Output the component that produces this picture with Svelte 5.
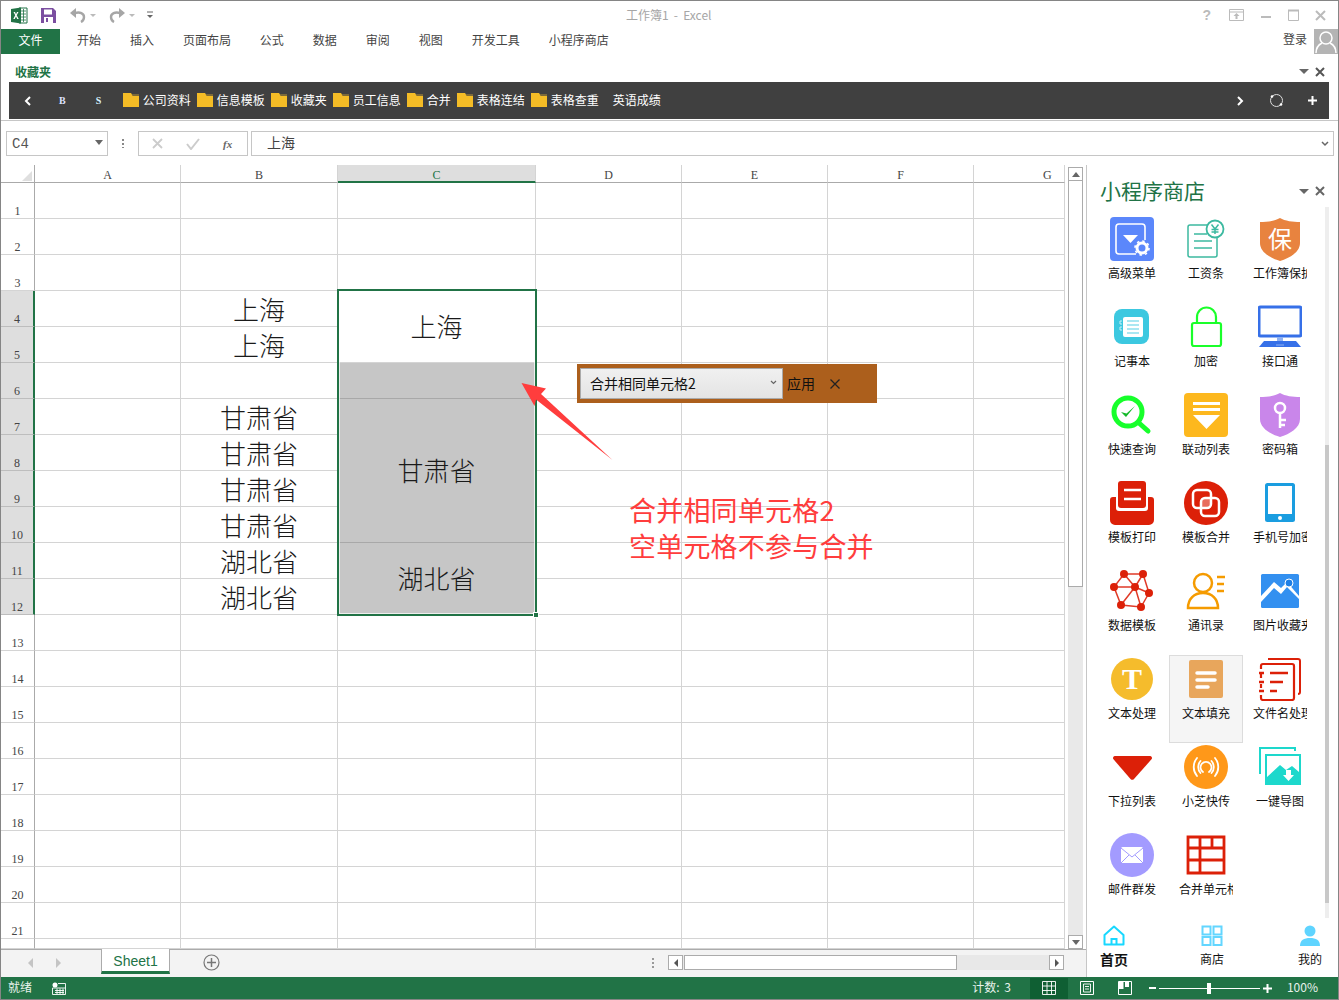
<script>
	const tabs = ["开始", "插入", "页面布局", "公式", "数据", "审阅", "视图", "开发工具", "小程序商店"];
	const folders = ["公司资料", "信息模板", "收藏夹", "员工信息", "合并", "表格连结", "表格查重"];
	const cols = ["A", "B", "C", "D", "E", "F", "G"];
	const rows = Array.from({ length: 22 }, (_, i) => i + 1);

	// text in column B by row
	const colB = { 4: "上海", 5: "上海", 7: "甘肃省", 8: "甘肃省", 9: "甘肃省", 10: "甘肃省", 11: "湖北省", 12: "湖北省" };

	// merged blocks of column C
	const merged = [
		{ start: 4, span: 2, text: "上海", grey: false },
		{ start: 6, span: 1, text: "", grey: true },
		{ start: 7, span: 4, text: "甘肃省", grey: true },
		{ start: 11, span: 2, text: "湖北省", grey: true }
	];

	const apps = [
		["高级菜单", `<rect width="44" height="44" rx="4" fill="#5b87fb"/><path d="M26 37H9a3 3 0 0 1-3-3V10a3 3 0 0 1 3-3h23a3 3 0 0 1 3 3v13" fill="none" stroke="#fff" stroke-width="1.6"/><path d="M13 18h15l-7.500 8z" fill="#fff"/><circle cx="32" cy="31" r="5" fill="none" stroke="#fff" stroke-width="3"/><circle cx="32" cy="31" r="7" fill="none" stroke="#fff" stroke-width="1.6" stroke-dasharray="2.500 3"/>`],
		["工资条", `<path d="M24 8H6a2 2 0 0 0-2 2v28a2 2 0 0 0 2 2h25a2 2 0 0 0 2-2V20" fill="none" stroke="#3cb9a0" stroke-width="1.500"/><path d="M10 17h13M10 24h18M10 31h18" stroke="#3cb9a0" stroke-width="1.600"/><circle cx="31" cy="12" r="8.500" fill="#fff" stroke="#3cb9a0" stroke-width="1.800"/><path d="M27.500 7.500 31 12l3.500-4.500M31 12v5M27.500 12.500h7M27.500 15h7" fill="none" stroke="#3cb9a0" stroke-width="1.500"/>`],
		["工作簿保护", `<path d="M22 1c5 3 13 4 20 4v21c0 9-10 15-20 18C12 41 2 35 2 26V5c7 0 15-1 20-4z" fill="#e8833f"/><text x="22" y="31" text-anchor="middle" font-size="24" fill="#fff">保</text>`],
		["记事本", `<rect x="4" y="4" width="35" height="35" rx="8" fill="#3cc8e0"/><rect x="13" y="12" width="20" height="20" rx="2" fill="#fff"/><path d="M12 16h-2v3h2M12 22h-2v3h2" fill="none" stroke="#c8f0f7"/><path d="M17 16h12M17 20h12M17 24h12M17 28h12" stroke="#8fdfee" stroke-width="1.600"/>`],
		["加密", `<rect x="8" y="18" width="29" height="23" rx="2" fill="none" stroke="#1aff2a" stroke-width="2.200"/><path d="M13 18v-6a9.500 9.500 0 0 1 19 0v6" fill="none" stroke="#1aff2a" stroke-width="2.200"/>`],
		["接口通", `<rect x="1" y="2" width="42" height="29" rx="1.500" fill="#fff" stroke="#3670e8" stroke-width="3"/><rect x="19" y="32" width="6" height="4" fill="#8fb1f2"/><path d="M6 36h32l5 6H1z" fill="#3670e8"/><path d="M18 40h8" stroke="#8fb1f2"/>`],
		["快速查询", `<circle cx="18" cy="19" r="14" fill="none" stroke="#17ff2b" stroke-width="5"/><path d="M29 30l9 8" stroke="#17ff2b" stroke-width="5" stroke-linecap="round"/><path d="M11 19l5 5 9-11-8.500 7.500z" fill="#14b82a"/>`],
		["联动列表", `<rect width="44" height="44" rx="4" fill="#fdb81e"/><path d="M9 9h27v3H9zM9 15h27v3H9zM9 22h27L22.500 36z" fill="#fff"/>`],
		["密码箱", `<path d="M22 0c5 3 13 4 20 4v22c0 9-10 15-20 18C12 41 2 35 2 26V4c7 0 15-1 20-4z" fill="#c986ea"/><circle cx="22" cy="15" r="5" fill="none" stroke="#fff" stroke-width="2.500"/><path d="M22 20v15M22 27h6M22 32h5" stroke="#fff" stroke-width="2.500" fill="none"/>`],
		["模板打印", `<rect x="8" y="0" width="28" height="27" rx="3" fill="#dc2008"/><path d="M14 9h17M14 18h17" stroke="#fff" stroke-width="2.500"/><path d="M6 16v11a3 3 0 0 0 3 3h26a3 3 0 0 0 3-3V16h3a3 3 0 0 1 3 3v20a5 5 0 0 1-5 5H5a5 5 0 0 1-5-5V19a3 3 0 0 1 3-3z" fill="#dc2008"/>`],
		["模板合并", `<circle cx="22" cy="22" r="22" fill="#dc2008"/><rect x="9" y="9" width="18" height="18" rx="4" fill="none" stroke="#fff" stroke-width="2.500"/><rect x="17" y="17" width="18" height="18" rx="4" fill="none" stroke="#fff" stroke-width="2.500"/><rect x="18" y="18" width="8" height="8" fill="#fff" fill-opacity=".35"/>`],
		["手机号加密", `<rect x="7" y="2" width="30" height="39" rx="2.500" fill="#1a9de0"/><rect x="10" y="5" width="24" height="28" fill="#fff"/><circle cx="22" cy="37" r="2" fill="#fff"/>`],
		["数据模板", `<path d="M14 5h19l6 19-8 14-20-2-7-18zM14 5l11 13M33 5l-8 13M4 18h21M25 18l14 6M25 18l6 20M25 18l-14 18" fill="none" stroke="#e03a28" stroke-width="1.500"/><g fill="#dc2008"><circle cx="14" cy="5" r="4"/><circle cx="33" cy="5" r="4"/><circle cx="4" cy="18" r="4"/><circle cx="25" cy="18" r="4"/><circle cx="39" cy="24" r="4"/><circle cx="11" cy="36" r="4"/><circle cx="31" cy="38" r="4"/></g>`],
		["通讯录", `<circle cx="19" cy="14" r="9" fill="none" stroke="#f59b00" stroke-width="2.500"/><path d="M4 39c0-9 6-15 15-15s15 6 15 15z" fill="none" stroke="#f59b00" stroke-width="2.500"/><path d="M33 8h8M33 15h7M33 22h7" stroke="#f59b00" stroke-width="2.500"/>`],
		["图片收藏夹", `<rect x="3" y="5" width="38" height="34" rx="1.500" fill="#3390f0"/><path d="M3 33l13-14 7 6 6-7 12 12v-3L29 13l-6 6-7-6L3 27z" fill="#fff"/><circle cx="31" cy="14" r="4" fill="#1e7fe6" stroke="#fff"/>`],
		["文本处理", `<circle cx="22" cy="22" r="21" fill="#f5bc2c"/><text x="22" y="32" text-anchor="middle" font-size="30" font-weight="700" fill="#fff" font-family="Liberation Serif">T</text>`],
		["文本填充", `<rect x="5" y="3" width="34" height="38" rx="2" fill="#e8a65c"/><path d="M13 16h18M13 23h18M13 30h11" stroke="#fff" stroke-width="3.500" stroke-linecap="round"/>`],
		["文件名处理", `<path d="M10 2h30a2 2 0 0 1 2 2v31a2 2 0 0 1-2 2" fill="none" stroke="#dc2008" stroke-width="2"/><path d="M3 12V9a2 2 0 0 1 2-2h29a2 2 0 0 1 2 2v32a2 2 0 0 1-2 2H5a2 2 0 0 1-2-2v-3M3 17v4M3 27v4" fill="none" stroke="#dc2008" stroke-width="2.200"/><path d="M1 16h5M12 16h18M1 25h5M12 25h13M1 34h5M12 34h7" stroke="#dc2008" stroke-width="2.400"/>`],
		["下拉列表", `<path d="M5 11h35a2 2 0 0 1 1.500 3.300L24 34a2.500 2.500 0 0 1-3.500 0L3.500 14.300A2 2 0 0 1 5 11z" fill="#dc2008"/>`],
		["小芝快传", `<circle cx="22" cy="22" r="22" fill="#ff9819"/><g fill="none" stroke="#fff" stroke-width="1.800" stroke-linecap="round"><path d="M13 31a14 14 0 0 1 0-18M31 13a14 14 0 0 1 0 18M16.500 28a9 9 0 0 1 0-12M27.500 16a9 9 0 0 1 0 12"/><path d="M19 27a5.500 5.500 0 1 1 6 0"/></g>`],
		["一键导图", `<path d="M2 29V3h35v3" fill="none" stroke="#1dd8cc" stroke-width="2"/><rect x="7" y="9" width="36" height="31" fill="#1dd8cc"/><path d="M9 11h32v16l-7-6-6 4-6-5-13 12z" fill="#fff"/><path d="M28 25h5v5h3l-5.500 6-5.500-6h3z" fill="#fff"/>`],
		["邮件群发", `<circle cx="22" cy="22" r="22" fill="#a39bff"/><rect x="11" y="14" width="22" height="16" rx="1.500" fill="#fff"/><path d="M11 15l11 9 11-9M11 30l8-8M33 30l-8-8" fill="none" stroke="#a39bff" stroke-width="1"/>`],
		["合并单元格", `<path d="M4 4h36v36H4zM4 15h36M4 27h36M16 4v36M28 4v11" fill="none" stroke="#dc2008" stroke-width="2.800"/>`]
	];
</script>

<div class="app">
	<header class="titlebar">
		<div class="qat">
			<svg width="17" height="17" viewBox="0 0 17 17"><path d="M8 1h8v15H8z" fill="#fff" stroke="#217346"/><path d="M10 4h5M10 7h5M10 10h5M10 13h5M12.500 2v13" stroke="#217346" stroke-width=".8"/><path d="M0 2l10-1.500v16L0 15z" fill="#217346"/><path d="M2.500 5l1.700 3.300L2.300 12h1.500l1.200-2.400L6.200 12h1.500L5.700 8.300 7.500 5H6L5 7.200 4 5z" fill="#fff"/></svg>
			<svg class="save" width="15" height="15" viewBox="0 0 15 15"><path d="M0 0h12l3 3v12H0z" fill="#7b4ea0"/><rect x="3" y="1.500" width="8" height="5" fill="#fff"/><rect x="3" y="9" width="9" height="6" fill="#fff"/><rect x="5" y="10" width="2" height="4" fill="#7b4ea0"/></svg>
			<svg class="undo" width="16" height="15" viewBox="0 0 16 15"><path d="M0 5l6-5v10z" fill="#a6a6a6"/><path d="M5 5c5-1.500 9 .5 9 4 0 2-1 4-3 5" fill="none" stroke="#a6a6a6" stroke-width="2.400"/></svg>
			<span class="caret"></span>
			<svg class="redo" width="16" height="15" viewBox="0 0 16 15"><path d="M16 5l-6-5v10z" fill="#a6a6a6"/><path d="M11 5C6 3.500 2 5.500 2 9c0 2 1 4 3 5" fill="none" stroke="#a6a6a6" stroke-width="2.400"/></svg>
			<span class="caret"></span>
			<svg class="more" width="6" height="8" viewBox="0 0 6 8"><path d="M0 1h6" stroke="#666"/><path d="M0 4h6L3 7z" fill="#666"/></svg>
		</div>
		<div class="doc-title">工作簿1 - Excel</div>
		<div class="winbtns">
			<span class="help">?</span>
			<svg width="15" height="12" viewBox="0 0 15 12"><path d="M.5.5h14v11H.5zM.5 3h14" fill="none" stroke="#bbb"/><path d="M7.500 4l3 3h-2v3h-2V7h-2z" fill="#bbb"/></svg>
			<svg width="10" height="12" viewBox="0 0 10 12"><path d="M0 8h10" stroke="#bbb" stroke-width="2"/></svg>
			<svg width="11" height="12" viewBox="0 0 11 12"><path d="M.5 1.500h10v10H.5z" fill="none" stroke="#bbb"/><path d="M0 1.500h11" stroke="#bbb" stroke-width="2"/></svg>
			<svg class="winclose" width="11" height="11" viewBox="0 0 11 11"><path d="M1 1l9 9M10 1l-9 9" stroke="#bbb" stroke-width="2"/></svg>
		</div>
	</header>

	<nav class="ribbon">
		<div class="file">文件</div>
		<div class="tabs">
			{#each tabs as tab}
				<span>{tab}</span>
			{/each}
		</div>
		<div class="login">登录</div>
		<div class="avatar">
			<svg width="24" height="24" viewBox="0 0 24 24"><circle cx="12" cy="9" r="6" fill="none" stroke="#fff" stroke-width="1.500"/><path d="M2 24c0-7 4-9 6-10M22 24c0-7-4-9-6-10" fill="none" stroke="#fff" stroke-width="1.500"/></svg>
		</div>
	</nav>

	<div class="fav-head">
		<span>收藏夹</span>
		<div class="pane-btns">
			<span class="drop"></span>
			<svg width="10" height="10" viewBox="0 0 10 10"><path d="M1 1l8 8M9 1L1 9" stroke="#555" stroke-width="2"/></svg>
		</div>
	</div>
	<div class="favbar">
		<svg class="chev" width="7" height="10" viewBox="0 0 7 10"><path d="M6 1L2 5l4 4" fill="none" stroke="#fff" stroke-width="2"/></svg>
		<span class="letter first">B</span>
		<span class="letter second">S</span>
		<div class="folders">
			{#each folders as name}
				<div class="folder">
					<svg width="16" height="14" viewBox="0 0 16 14"><path d="M0 0h8l2 3h6v11H0z" fill="#f4bc26"/><path d="M8 0l2 3h6V1H8z" fill="#7c6a3a"/></svg>
					<span>{name}</span>
				</div>
			{/each}
			<span class="plain">英语成绩</span>
		</div>
		<div class="fav-right">
			<svg width="7" height="10" viewBox="0 0 7 10"><path d="M1 1l4 4-4 4" fill="none" stroke="#fff" stroke-width="2"/></svg>
			<svg width="15" height="15" viewBox="0 0 15 15"><circle cx="7.500" cy="7.500" r="6" fill="none" stroke="#ddd"/><circle cx="3" cy="3.500" r="1.300" fill="#fff"/><circle cx="12" cy="11.500" r="1.300" fill="#fff"/></svg>
			<svg width="9" height="9" viewBox="0 0 9 9"><path d="M4.500 0v9M0 4.500h9" stroke="#fff" stroke-width="2"/></svg>
		</div>
	</div>
	<div class="rule"></div>

	<div class="formula">
		<div class="namebox"><span>C4</span><i class="drop"></i></div>
		<div class="fdots"></div>
		<div class="fxbox">
			<svg width="11" height="11" viewBox="0 0 11 11"><path d="M1 1l9 9M10 1l-9 9" stroke="#ccc" stroke-width="1.800"/></svg>
			<svg width="14" height="12" viewBox="0 0 14 12"><path d="M1 6l4 5 8-10" fill="none" stroke="#ccc" stroke-width="2"/></svg>
			<em>fx</em>
		</div>
		<div class="finput">
			<span>上海</span>
			<svg width="8" height="6" viewBox="0 0 8 6"><path d="M1 1l3 3 3-3" fill="none" stroke="#666" stroke-width="1.500"/></svg>
		</div>
	</div>

	<div class="middle">
		<div class="workbook">
			<div class="sheetrow">
				<div class="sheet">
					<div class="corner"><i></i></div>
					{#each cols as c}
						<div class="colhead" class:on={c === "C"} class:cut={c === "G"}>{c}</div>
					{/each}

					{#each rows as r}
						<div class="rowhead" class:on={r >= 4 && r <= 12} style="grid-row: {r + 1}">
							{#if r < 22}<span>{r}</span>{/if}
						</div>
						{#each cols as c, ci}
							{#if c !== "C" || r > 12 || r < 4}
								<div class="cell" style="grid-row: {r + 1}; grid-column: {ci + 2}">
									{#if c === "B" && colB[r]}<span class="big">{colB[r]}</span>{/if}
								</div>
							{/if}
						{/each}
					{/each}

					{#each merged as m}
						<div class="cell merged" class:grey={m.grey} style="grid-row: {m.start + 1} / span {m.span}; grid-column: 4">
							<span class="big">{m.text}</span>
						</div>
					{/each}

					<div class="selection"><i></i></div>

					<svg class="arrow" width="100" height="90" viewBox="0 0 100 90"><path d="M2.500 2l24.500 5.500-5 5.500L93.500 79 17 18.500 15.500 25z" fill="#ff3d3d"/></svg>

					<div class="toolbar">
						<div class="combo"><span>合并相同单元格2</span><svg width="7" height="5" viewBox="0 0 7 5"><path d="M1 1l2.500 2.500L6 1" fill="none" stroke="#666" stroke-width="1.200"/></svg></div>
						<span class="apply">应用</span>
						<svg width="12" height="12" viewBox="0 0 12 12"><path d="M1.500 1.500l9 9M10.500 1.500l-9 9" stroke="#222" stroke-width="1.300"/></svg>
					</div>

					<div class="note">合并相同单元格2<br />空单元格不参与合并</div>
				</div>
				<div class="vscroll">
					<div class="sbtn"><i class="up"></i></div>
					<div class="vthumb"></div>
					<div class="vtrack"></div>
					<div class="sbtn"><i class="down"></i></div>
				</div>
			</div>
			<div class="sheettabs">
				<i class="tri left"></i>
				<i class="tri right"></i>
				<div class="sheettab">Sheet1</div>
				<svg class="addsheet" width="17" height="17" viewBox="0 0 17 17"><circle cx="8.500" cy="8.500" r="7.500" fill="none" stroke="#777" stroke-width="1.200"/><path d="M8.500 4v9M4 8.500h9" stroke="#777" stroke-width="1.500"/></svg>
				<div class="hdots"></div>
				<div class="hscroll">
					<div class="hbtn"><i class="tri left dark"></i></div>
					<div class="hthumb"></div>
					<div class="htrack"></div>
					<div class="hbtn"><i class="tri right dark"></i></div>
				</div>
			</div>
		</div>

		<aside class="side">
			<div class="side-head">
				<span>小程序商店</span>
				<div class="pane-btns">
					<span class="drop"></span>
					<svg width="10" height="10" viewBox="0 0 10 10"><path d="M1 1l8 8M9 1L1 9" stroke="#666" stroke-width="2"/></svg>
				</div>
			</div>
			<div class="side-body">
				<div class="applist">
					{#each apps as [name, icon]}
						<div class="app-item" class:hot={name === "文本填充"}>
							<svg width="44" height="44" viewBox="0 0 44 44">{@html icon}</svg>
							<div class="app-name">{name}</div>
						</div>
					{/each}
				</div>
				<div class="sidescroll"><div></div></div>
			</div>
			<div class="sidenav">
				<div class="navitem">
					<svg width="22" height="21" viewBox="0 0 22 21"><path d="M11 1.500L1.500 10v9.500h19V10z" fill="none" stroke="#18d8ff" stroke-width="2" stroke-linejoin="round"/><path d="M8.500 19.500V14h5v5.500" fill="none" stroke="#18d8ff" stroke-width="2"/></svg>
					<b>首页</b>
				</div>
				<div class="navitem">
					<svg width="22" height="21" viewBox="0 0 22 21"><path d="M1.500 1.500h8v8h-8zM12.500 1.500h8v8h-8zM1.500 12h8v8h-8zM12.500 12h8v8h-8z" fill="none" stroke="#63d6ff" stroke-width="2"/></svg>
					<span>商店</span>
				</div>
				<div class="navitem">
					<svg width="22" height="21" viewBox="0 0 22 21"><circle cx="11" cy="6" r="5.500" fill="#5fd4ff"/><path d="M1 21c0-6 4-8 10-8s10 2 10 8z" fill="#5fd4ff"/></svg>
					<span>我的</span>
				</div>
			</div>
		</aside>
	</div>

	<footer class="status">
		<span class="ready">就绪</span>
		<svg class="macro" width="14" height="13" viewBox="0 0 14 13"><circle cx="3" cy="3" r="2.500" fill="#fff"/><path d="M6 1.500h7.500v11H.5V6h13M3 8.500h9M3 10.500h9M5 6.500v5.500M8 6.500v5.500M11 6.500v5.500" fill="none" stroke="#fff" stroke-width=".9"/></svg>
		<span class="count">计数: 3</span>
		<div class="viewbtn active">
			<svg width="14" height="14" viewBox="0 0 14 14"><path d="M.5.500h13v13H.5zM.5 5h13M.5 9.500h13M5 .5v13M9.500.5v13" fill="none" stroke="#fff" stroke-width=".9"/></svg>
		</div>
		<div class="viewbtn">
			<svg width="14" height="14" viewBox="0 0 14 14"><path d="M.5.500h13v13H.5z" fill="none" stroke="#fff"/><path d="M3.500 3h7v8h-7zM5 5.500h4M5 8h4" fill="none" stroke="#fff" stroke-width=".9"/></svg>
		</div>
		<div class="viewbtn">
			<svg width="14" height="14" viewBox="0 0 14 14"><path d="M.5.500h13v13H.5z" fill="none" stroke="#fff"/><path d="M1 1h4.500v7H1zM7 1h4v5H7z" fill="#fff"/></svg>
		</div>
		<div class="zoom">
			<i class="minus"></i>
			<div class="ztrack"><i></i></div>
			<svg width="9" height="9" viewBox="0 0 9 9"><path d="M4.500 0v9M0 4.500h9" stroke="#fff" stroke-width="2"/></svg>
			<span>100%</span>
		</div>
	</footer>
</div>

<style>
	:global(body) {
		margin: 0;
		background: #fff;
	}
	.app {
		width: 1339px;
		height: 1000px;
		box-sizing: border-box;
		border: 1px solid #858585;
		display: flex;
		flex-direction: column;
		overflow: hidden;
		background: #fff;
		font-family: "Noto Sans CJK SC", "Liberation Sans", sans-serif;
		font-size: 12px;
		line-height: 16px;
		color: #444;
	}
	svg {
		display: block;
		flex: none;
	}
	i {
		display: block;
	}

	/* title bar */
	.titlebar {
		height: 28px;
		flex: none;
		display: flex;
		align-items: center;
	}
	.qat {
		width: 300px;
		padding-left: 10px;
		display: flex;
		align-items: center;
		box-sizing: border-box;
	}
	.save {
		margin-left: 13px;
	}
	.undo {
		margin-left: 14px;
	}
	.redo {
		margin-left: 13px;
	}
	.more {
		margin-left: 12px;
	}
	.caret {
		margin-left: 4px;
		border: 3px solid transparent;
		border-top: 3px solid #bbb;
		margin-top: 3px;
	}
	.doc-title {
		margin-left: 325px;
		color: #a6a6a6;
		word-spacing: 2.5px;
		padding-bottom: 1px;
	}
	.winbtns {
		margin-left: auto;
		display: flex;
		align-items: center;
		gap: 17px;
		padding-right: 12px;
	}
	.help {
		color: #bbb;
		font: 700 14px "Liberation Sans", sans-serif;
		margin-right: 1px;
	}
	.winclose {
		margin-left: -1px;
	}

	/* ribbon */
	.ribbon {
		height: 25px;
		flex: none;
		display: flex;
		align-items: center;
	}
	.file {
		width: 59px;
		height: 25px;
		background: #217346;
		color: #fff;
		text-align: center;
		line-height: 22px;
	}
	.tabs {
		display: flex;
		gap: 28.95px;
		margin-left: 17px;
		padding-bottom: 4px;
	}
	.login {
		margin-left: auto;
		margin-right: 7px;
		padding-bottom: 6px;
	}
	.avatar {
		width: 24px;
		height: 25px;
		background: #b4b4b4;
		overflow: hidden;
	}
	.fav-head {
		height: 28px;
		flex: none;
		display: flex;
		align-items: center;
		padding: 7px 13px 0 14px;
		box-sizing: border-box;
		color: #217346;
		font-weight: 700;
		line-height: 16px;
	}
	.pane-btns {
		margin-left: auto;
		display: flex;
		align-items: center;
		gap: 6px;
	}
	.drop {
		display: block;
		border: 5px solid transparent;
		border-top: 5px solid #666;
		border-bottom: 0;
	}

	/* favorites */
	.favbar {
		height: 37px;
		flex: none;
		margin: 0 9px 0 8px;
		background: #404040;
		color: #fff;
		display: flex;
		align-items: center;
	}
	.chev {
		margin-left: 15px;
	}
	.letter {
		font: 700 10px "Liberation Serif", serif;
	}
	.first {
		margin-left: 28px;
		color: #dfe3ff;
	}
	.second {
		margin-left: 30px;
		color: #d8f2ff;
	}
	.folders {
		display: flex;
		align-items: center;
		gap: 6px;
		margin-left: 21.5px;
		padding-bottom: 2px;
	}
	.folder {
		display: flex;
		align-items: center;
		gap: 4px;
	}
	.plain {
		margin-left: 8px;
	}
	.fav-right {
		margin-left: auto;
		display: flex;
		align-items: center;
		gap: 24.5px;
		padding-right: 12px;
	}
	.rule {
		height: 1px;
		flex: none;
		margin-top: 1px;
		background: #c6c6c6;
	}

	/* formula bar */
	.formula {
		height: 25px;
		flex: none;
		margin: 10px 0 9px 5px;
		display: flex;
		align-items: stretch;
	}
	.namebox {
		width: 102px;
		box-sizing: border-box;
		border: 1px solid #c6c6c6;
		display: flex;
		align-items: center;
		justify-content: space-between;
		padding: 0 4px 0 5px;
		font: 14px "Liberation Mono", monospace;
		color: #555;
	}
	.namebox .drop {
		border-width: 4px;
		border-top-width: 5px;
		border-bottom: 0;
		margin-top: -3px;
	}
	.fdots {
		width: 2px;
		height: 10px;
		margin: 7px 14px 0 14px;
		background: radial-gradient(circle, #888 1px, transparent 1px) 0 0 / 2px 4px;
	}
	.fxbox {
		width: 110px;
		box-sizing: border-box;
		border: 1px solid #c6c6c6;
		display: flex;
		align-items: center;
		gap: 23px;
		padding-left: 13px;
		margin-right: 3px;
	}
	.fxbox em {
		font: italic 700 11px "Liberation Serif", serif;
		color: #666;
	}
	.finput {
		width: 1083px;
		box-sizing: border-box;
		border: 1px solid #c6c6c6;
		display: flex;
		align-items: center;
		justify-content: space-between;
		padding: 0 4px 0 15px;
		font-size: 14px;
		color: #444;
	}
	.finput span {
		margin-top: -3px;
	}

	/* sheet */
	.middle {
		height: 812px;
		flex: none;
		display: flex;
	}
	.workbook {
		width: 1085px;
		flex: none;
		display: flex;
		flex-direction: column;
	}
	.sheetrow {
		height: 784px;
		display: flex;
	}
	.sheet {
		position: relative;
		display: grid;
		grid-template-columns: 34px 146px 157px 198px 146px 146px 146px 91px;
		grid-template-rows: 18px repeat(21, 36px) 10px;
		overflow: hidden;
		width: 1064px;
		height: 784px;
		flex: none;
		font-family: "Liberation Serif", "Noto Sans CJK SC", serif;
	}
	.corner {
		border-right: 1px solid #aaa;
		border-bottom: 1px solid #aaa;
		position: relative;
		display: flex;
		justify-content: flex-end;
		align-items: flex-end;
		padding: 0 2px 1px 0;
		box-sizing: border-box;
	}
	.corner i {
		border-left: 10px solid transparent;
		border-bottom: 10px solid #dfdfdf;
	}
	.colhead {
		border-right: 1px solid #d4d4d4;
		border-bottom: 1px solid #aaa;
		text-align: center;
		line-height: 20px;
		color: #444;
		box-sizing: border-box;
	}
	.colhead.cut {
		text-align: left;
		padding-left: 69px;
	}
	.colhead.on {
		background: #dedede;
		color: #217346;
		border-bottom: 2px solid #217346;
	}
	.rowhead {
		grid-column: 1;
		border-right: 1px solid #aaa;
		border-bottom: 1px solid #d4d4d4;
		box-sizing: border-box;
		display: flex;
		align-items: flex-end;
		justify-content: center;
		color: #444;
		line-height: 13px;
	}
	.rowhead.on {
		background: #dedede;
		border-right: 2px solid #217346;
		border-bottom-color: #bdbdbd;
	}
	.cell {
		border-right: 1px solid #d4d4d4;
		border-bottom: 1px solid #d4d4d4;
		box-sizing: border-box;
		display: flex;
		align-items: center;
		justify-content: center;
		min-width: 0;
	}
	.merged.grey {
		background: #c6c6c6;
		border-bottom-color: #a8a8a8;
	}
	.big {
		font-family: "Noto Sans CJK SC", serif;
		font-size: 26px;
		line-height: 34px;
		font-weight: 300;
		color: #1a1a1a;
	}
	.merged .big {
		margin-top: -1px;
	}
	.selection {
		position: absolute;
		left: 336px;
		top: 124px;
		width: 200px;
		height: 327px;
		box-sizing: border-box;
		border: 2px solid #217346;
		box-shadow: inset 0 0 0 1px rgba(255, 255, 255, 0.7);
	}
	.selection i {
		position: absolute;
		right: -4px;
		bottom: -4px;
		width: 4px;
		height: 4px;
		background: #217346;
		border: 1px solid #fff;
	}
	.arrow {
		position: absolute;
		left: 518px;
		top: 216px;
	}
	.toolbar {
		position: absolute;
		left: 576px;
		top: 199px;
		width: 300px;
		height: 39px;
		box-sizing: border-box;
		background: #ac5f1c;
		padding: 4px 3px;
		display: flex;
		align-items: center;
		font-family: "Noto Sans CJK SC", sans-serif;
		font-size: 14px;
		color: #111;
	}
	.combo {
		width: 203px;
		height: 31px;
		box-sizing: border-box;
		border: 1px solid #aaa;
		background: linear-gradient(#f0f0f0, #e4e4e4);
		display: flex;
		align-items: center;
		justify-content: space-between;
		padding: 0 5px 2px 9px;
	}
	.apply {
		margin: 0 14px 2px 4px;
	}
	.note {
		position: absolute;
		left: 628px;
		top: 327px;
		color: #ff3d3d;
		font-family: "Noto Sans CJK SC", sans-serif;
		font-size: 27px;
		letter-spacing: 0.2px;
		line-height: 36px;
		white-space: nowrap;
	}
	.vscroll {
		width: 15px;
		margin: 2px 0 0 3px;
		display: flex;
		flex-direction: column;
		flex: none;
	}
	.sbtn {
		height: 14px;
		flex: none;
		box-sizing: border-box;
		border: 1px solid #ababab;
		display: flex;
		align-items: center;
		justify-content: center;
	}
	.up {
		border: 4px solid transparent;
		border-bottom: 5px solid #666;
		border-top: 0;
	}
	.down {
		border: 4px solid transparent;
		border-top: 5px solid #666;
		border-bottom: 0;
	}
	.vthumb {
		height: 406px;
		flex: none;
		box-sizing: border-box;
		border: 1px solid #ababab;
		border-top: 0;
	}
	.vtrack {
		flex: 1;
		background: #e9e9e9;
	}
	.sheettabs {
		height: 28px;
		flex: none;
		background: #f3f3f3;
		border-top: 1px solid #ababab;
		box-sizing: border-box;
		display: flex;
		align-items: center;
		padding-bottom: 2px;
		position: relative;
	}
	.tri {
		border: 5px solid transparent;
		border-left-width: 0;
		border-right-width: 0;
	}
	.tri.left {
		border-right: 5px solid #c4c4c4;
	}
	.tri.right {
		border-left: 5px solid #c4c4c4;
	}
	.tri.dark.left {
		border-right-color: #555;
		border-width: 4px 4px 4px 0;
	}
	.tri.dark.right {
		border-left-color: #555;
		border-width: 4px 0 4px 4px;
	}
	.sheettabs > .tri.left {
		margin-left: 27px;
	}
	.sheettabs > .tri.right {
		margin-left: 23px;
	}
	.sheettab {
		margin-left: 40px;
		margin-top: -1px;
		width: 69px;
		height: 25px;
		box-sizing: border-box;
		background: #fff;
		border: 1px solid #ababab;
		border-top: 0;
		border-bottom: 3px solid #217346;
		color: #217346;
		font: 14px/24px "Liberation Sans", sans-serif;
		text-align: center;
		align-self: flex-start;
	}
	.addsheet {
		margin-left: 33px;
	}
	.hdots {
		width: 2px;
		height: 12px;
		margin-left: 432px;
		background: radial-gradient(circle, #999 1px, transparent 1px) 0 0 / 2px 4px;
	}
	.hscroll {
		width: 396px;
		height: 15px;
		margin-left: 14px;
		display: flex;
		background: #e8e8e8;
	}
	.hbtn {
		width: 15px;
		box-sizing: border-box;
		border: 1px solid #ababab;
		background: #fff;
		flex: none;
		display: flex;
		align-items: center;
		justify-content: center;
	}
	.hthumb {
		width: 273px;
		box-sizing: border-box;
		background: #fff;
		border: 1px solid #ababab;
		margin-left: 1px;
	}
	.htrack {
		flex: 1;
	}

	/* right pane */
	.side {
		width: 252px;
		flex: none;
		border-left: 1px solid #c6c6c6;
		display: flex;
		flex-direction: column;
		box-sizing: border-box;
	}
	.side-head {
		height: 42px;
		flex: none;
		display: flex;
		align-items: center;
		padding: 7px 13px 0 13px;
		box-sizing: border-box;
		color: #217346;
		font-size: 21px;
		line-height: 28px;
	}
	.side-head .pane-btns {
		margin-top: 3px;
	}
	.side-body {
		height: 711px;
		flex: none;
		display: flex;
		overflow: hidden;
	}
	.applist {
		width: 238px;
		flex: none;
		box-sizing: border-box;
		padding: 8px 0 0 8px;
		display: grid;
		grid-template-columns: repeat(3, 74px);
		grid-auto-rows: 88px;
	}
	.app-item {
		box-sizing: border-box;
		display: flex;
		flex-direction: column;
		align-items: center;
		padding-top: 2px;
		color: #111;
	}
	.app-item.hot {
		background: #f5f5f5;
		box-shadow: inset 0 0 0 1px #dcdcdc;
	}
	.app-name {
		width: 54px;
		margin-top: 4px;
		text-align: center;
		white-space: nowrap;
		overflow: hidden;
		flex: none;
	}
	.app-item text {
		font-family: "Noto Sans CJK SC", sans-serif;
	}
	.sidescroll {
		width: 4px;
		flex: none;
		background: #eee;
		position: relative;
	}
	.sidescroll div {
		height: 458px;
		margin-top: 238px;
		background: #c8c8c8;
	}
	.sidenav {
		flex: 1;
		display: flex;
		gap: 44px;
		padding-top: 7px;
		box-sizing: border-box;
	}
	.navitem {
		width: 54px;
		display: flex;
		flex-direction: column;
		align-items: center;
		gap: 3px;
		color: #111;
		line-height: 20px;
	}
	.navitem b {
		font-size: 14px;
	}

	/* status bar */
	.status {
		height: 22px;
		flex: none;
		background: #217346;
		color: #e8f2ec;
		display: flex;
		align-items: center;
	}
	.ready {
		margin-left: 7px;
		padding-bottom: 2px;
	}
	.macro {
		margin-left: 20px;
	}
	.count {
		margin-left: auto;
		margin-right: 19px;
		word-spacing: 2px;
		padding-bottom: 2px;
	}
	.viewbtn {
		width: 38px;
		height: 21px;
		display: flex;
		align-items: center;
		justify-content: center;
	}
	.viewbtn.active {
		background: #0f5f33;
	}
	.zoom {
		display: flex;
		align-items: center;
		margin-left: 5px;
		padding-right: 20px;
	}
	.minus {
		width: 7px;
		height: 2px;
		background: #fff;
	}
	.ztrack {
		width: 101px;
		height: 1px;
		background: #fff;
		margin: 0 3px;
		position: relative;
	}
	.ztrack i {
		position: absolute;
		left: 48px;
		top: -5px;
		width: 4px;
		height: 11px;
		background: #fff;
	}
	.zoom span {
		margin-left: 15px;
		padding-bottom: 2px;
	}
</style>
